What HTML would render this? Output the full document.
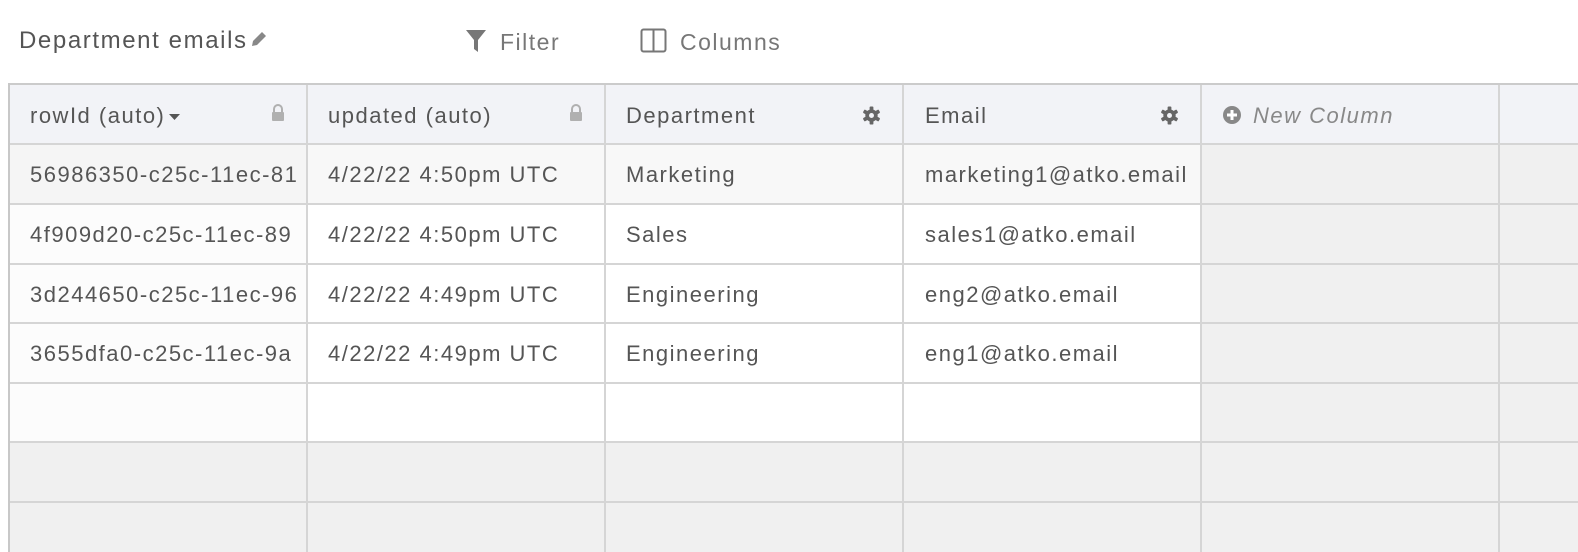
<!DOCTYPE html>
<html><head><meta charset="utf-8"><style>
*{margin:0;padding:0;box-sizing:border-box}
body{width:1578px;height:552px;overflow:hidden;background:#fff;font-family:"Liberation Sans",sans-serif;color:#555;position:relative}
.a{position:absolute}
.t{position:absolute;font-size:22px;letter-spacing:1.5px;line-height:24px;white-space:nowrap;overflow:hidden}
.h{background:#d5d5d5}
</style></head><body>
<div class="t" style="left:19px;top:29px;font-size:24px;letter-spacing:1.6px;color:#555">Department emails<svg style="vertical-align:top;margin-left:1px" width="20" height="20" viewBox="0 0 20 20"><path d="M3 17 L4 12 L13 3 L17 7 L8 16 Z" fill="#888"/></svg></div>
<svg class="a" style="left:465px;top:29px" width="22" height="24" viewBox="0 0 22 24"><path d="M1 1 H21 L13 11 V23 L9 20 V11 Z" fill="#777"/></svg>
<div class="t" style="left:500px;top:30px;font-size:23px;color:#777">Filter</div>
<svg class="a" style="left:640px;top:28px" width="28" height="26" viewBox="0 0 28 26"><rect x="1.5" y="1.5" width="24" height="22" rx="2" fill="none" stroke="#777" stroke-width="2"/><line x1="13.5" y1="2" x2="13.5" y2="23" stroke="#777" stroke-width="2"/></svg>
<div class="t" style="left:680px;top:30px;font-size:23px;color:#777">Columns</div>

<div class="a" style="left:9px;top:85px;width:1569px;height:59px;background:#f2f3f7"></div>
<div class="a" style="left:9px;top:144px;width:298px;height:408px;background:#fcfcfc"></div>
<div class="a" style="left:307px;top:144px;width:894px;height:298px;background:#fff"></div>
<div class="a" style="left:307px;top:144px;width:894px;height:60px;background:#f8f8f8"></div>
<div class="a" style="left:9px;top:144px;width:298px;height:60px;background:#f5f5f5"></div>
<div class="a" style="left:1201px;top:144px;width:377px;height:408px;background:#f0f0f0"></div>
<div class="a" style="left:9px;top:442px;width:1192px;height:110px;background:#f0f0f0"></div>

<div class="a" style="left:8px;top:83px;width:1570px;height:2px;background:#cbcbcb"></div>
<div class="a" style="left:8px;top:83px;width:2px;height:469px;background:#c8c8c8"></div>
<div class="a h" style="left:306px;top:85px;width:2px;height:467px"></div>
<div class="a h" style="left:604px;top:85px;width:2px;height:467px"></div>
<div class="a h" style="left:902px;top:85px;width:2px;height:467px"></div>
<div class="a h" style="left:1200px;top:85px;width:2px;height:467px"></div>
<div class="a h" style="left:1498px;top:85px;width:2px;height:467px"></div>
<div class="a h" style="left:10px;top:143px;width:1568px;height:2px"></div>
<div class="a h" style="left:10px;top:203px;width:1568px;height:2px"></div>
<div class="a h" style="left:10px;top:263px;width:1568px;height:2px"></div>
<div class="a h" style="left:10px;top:322px;width:1568px;height:2px"></div>
<div class="a h" style="left:10px;top:382px;width:1568px;height:2px"></div>
<div class="a h" style="left:10px;top:441px;width:1568px;height:2px"></div>
<div class="a h" style="left:10px;top:501px;width:1568px;height:2px"></div>

<div class="t" style="left:30px;top:104px">rowId (auto)<svg style="vertical-align:middle;margin-left:3px" width="14" height="8"><path d="M1 1 H12 L6.5 7 Z" fill="#555"/></svg></div>
<svg class="a" style="left:270px;top:104px" width="16" height="18" viewBox="0 0 16 18"><path d="M4 8 V5 a4 4 0 0 1 8 0 V8" fill="none" stroke="#b0b0b0" stroke-width="2"/><rect x="2" y="8" width="12" height="9" rx="1" fill="#b0b0b0"/></svg>
<div class="t" style="left:328px;top:104px">updated (auto)</div>
<svg class="a" style="left:568px;top:104px" width="16" height="18" viewBox="0 0 16 18"><path d="M4 8 V5 a4 4 0 0 1 8 0 V8" fill="none" stroke="#b0b0b0" stroke-width="2"/><rect x="2" y="8" width="12" height="9" rx="1" fill="#b0b0b0"/></svg>
<div class="t" style="left:626px;top:104px">Department</div>
<svg class="a" style="left:862px;top:106px" width="19" height="19" viewBox="0 0 20 20"><g fill="#666"><circle cx="10" cy="10" r="6.5"/><rect x="8" y="0.5" width="4" height="19" rx="1"/><rect x="8" y="0.5" width="4" height="19" rx="1" transform="rotate(60 10 10)"/><rect x="8" y="0.5" width="4" height="19" rx="1" transform="rotate(120 10 10)"/></g><circle cx="10" cy="10" r="2.6" fill="#f2f3f7"/></svg>
<div class="t" style="left:925px;top:104px">Email</div>
<svg class="a" style="left:1160px;top:106px" width="19" height="19" viewBox="0 0 20 20"><g fill="#666"><circle cx="10" cy="10" r="6.5"/><rect x="8" y="0.5" width="4" height="19" rx="1"/><rect x="8" y="0.5" width="4" height="19" rx="1" transform="rotate(60 10 10)"/><rect x="8" y="0.5" width="4" height="19" rx="1" transform="rotate(120 10 10)"/></g><circle cx="10" cy="10" r="2.6" fill="#f2f3f7"/></svg>
<svg class="a" style="left:1222px;top:105px" width="20" height="20" viewBox="0 0 20 20"><circle cx="10" cy="10" r="9" fill="#888"/><path d="M10 5 V15 M5 10 H15" stroke="#fff" stroke-width="3"/></svg>
<div class="t" style="left:1253px;top:104px;font-style:italic;color:#888">New Column</div>

<div class="t" style="left:30px;top:163px;width:276px">56986350-c25c-11ec-81</div>
<div class="t" style="left:328px;top:163px">4/22/22 4:50pm UTC</div>
<div class="t" style="left:626px;top:163px">Marketing</div>
<div class="t" style="left:925px;top:163px">marketing1@atko.email</div>

<div class="t" style="left:30px;top:223px;width:276px">4f909d20-c25c-11ec-89</div>
<div class="t" style="left:328px;top:223px">4/22/22 4:50pm UTC</div>
<div class="t" style="left:626px;top:223px">Sales</div>
<div class="t" style="left:925px;top:223px">sales1@atko.email</div>

<div class="t" style="left:30px;top:283px;width:276px">3d244650-c25c-11ec-96</div>
<div class="t" style="left:328px;top:283px">4/22/22 4:49pm UTC</div>
<div class="t" style="left:626px;top:283px">Engineering</div>
<div class="t" style="left:925px;top:283px">eng2@atko.email</div>

<div class="t" style="left:30px;top:342px;width:276px">3655dfa0-c25c-11ec-9a</div>
<div class="t" style="left:328px;top:342px">4/22/22 4:49pm UTC</div>
<div class="t" style="left:626px;top:342px">Engineering</div>
<div class="t" style="left:925px;top:342px">eng1@atko.email</div>
</body></html>
